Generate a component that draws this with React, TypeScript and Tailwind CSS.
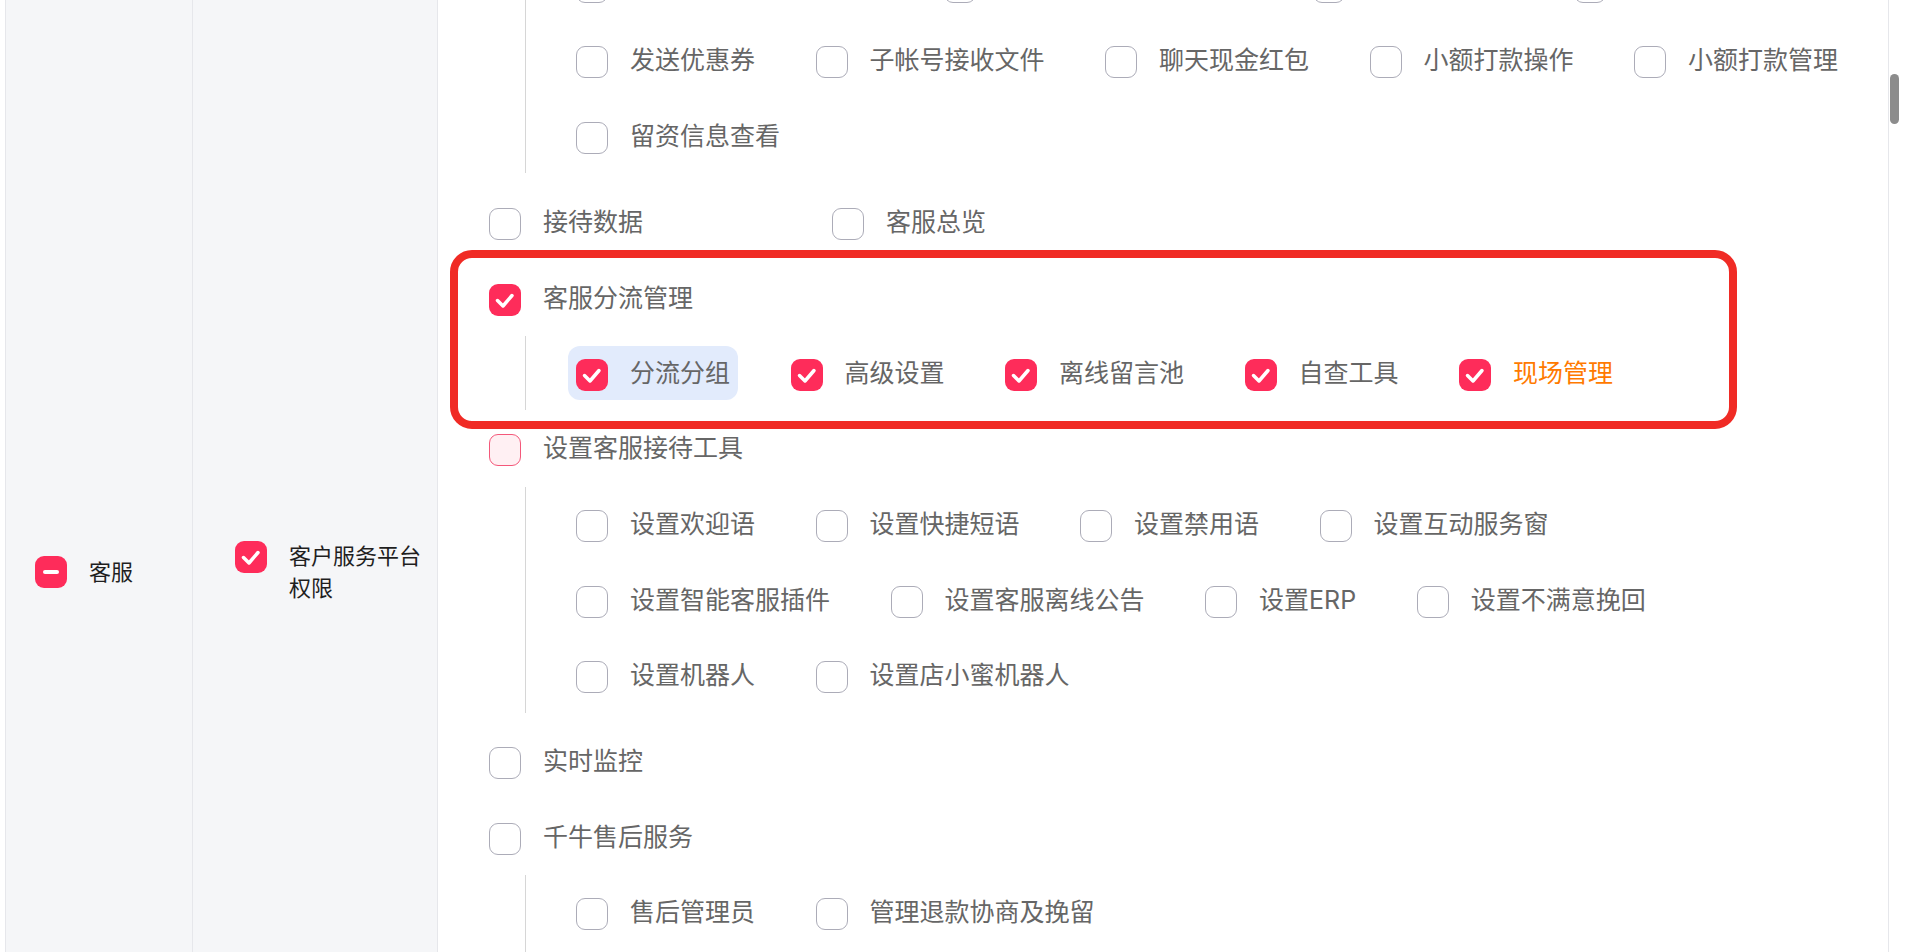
import React from "react";

type BoxState = "off" | "on" | "partial" | "hover";

type Item = {
  label: string;
  state?: BoxState;
  active?: boolean;
  accent?: boolean;
  width?: string;
};

function Box({ state = "off" }: { state?: BoxState }) {
  if (state === "on") {
    return (
      <span className="mt-[4px] flex h-[32px] w-[32px] shrink-0 items-center justify-center rounded-[9px] bg-[#fe2c5a]">
        <svg width="32" height="32" viewBox="0 0 32 32" fill="none">
          <path d="M8.5 16.5l5.5 5.5 9-10.5" stroke="white" strokeWidth="3.5" strokeLinecap="round" strokeLinejoin="round" />
        </svg>
      </span>
    );
  }
  if (state === "partial") {
    return (
      <span className="flex h-[32px] w-[32px] shrink-0 items-center justify-center rounded-[9px] bg-[#fe2c5a]">
        <span className="h-[4px] w-[16px] rounded-full bg-white" />
      </span>
    );
  }
  if (state === "hover") {
    return <span className="mt-[4px] h-[32px] w-[32px] shrink-0 rounded-[9px] border-[1.5px] border-[#f4587a] bg-[#fff0f3]" />;
  }
  return <span className="mt-[4px] h-[32px] w-[32px] shrink-0 rounded-[9px] border-[1.5px] border-[#acacb8] bg-white" />;
}

function Option({ item }: { item: Item }) {
  return (
    <div
      className={`flex h-[54px] shrink-0 items-center gap-[22px] rounded-[12px] px-[8px] ${item.active ? "bg-[#e2ebfc]" : ""} ${item.width ?? ""}`}
    >
      <Box state={item.state} />
      {item.label && (
        <span className={`whitespace-nowrap text-[25px] leading-[34px] ${item.accent ? "text-[#ff7a00]" : "text-[#666666]"}`}>
          {item.label}
        </span>
      )}
    </div>
  );
}

function Row({ items }: { items: Item[] }) {
  return (
    <div className="flex h-[54px] items-center gap-[44.5px]">
      {items.map((it, i) => (
        <Option key={i} item={it} />
      ))}
    </div>
  );
}

function Children({ rows, className = "" }: { rows: Item[][]; className?: string }) {
  return (
    <div className={`ml-[87px] flex flex-col gap-[21.5px] border-l border-[#d6d6d6] pl-[42px] ${className}`}>
      {rows.map((r, i) => (
        <Row key={i} items={r} />
      ))}
    </div>
  );
}

function Header({ items, className = "" }: { items: Item[]; className?: string }) {
  return (
    <div className={`flex h-[54px] items-center pl-[43px] ${className}`}>
      {items.map((it, i) => (
        <Option key={i} item={it} />
      ))}
    </div>
  );
}

export default function App() {
  // first row sits above the visible area; only the bottom edge of its boxes shows
  const topGroup: Item[][] = [
    [
      { label: "", width: "w-[323px]" },
      { label: "", width: "w-[325px]" },
      { label: "", width: "w-[216px]" },
      { label: "" },
    ],
    [
      { label: "发送优惠券" },
      { label: "子帐号接收文件" },
      { label: "聊天现金红包" },
      { label: "小额打款操作" },
      { label: "小额打款管理" },
    ],
    [{ label: "留资信息查看" }],
  ];

  const splitGroup: Item[][] = [
    [
      { label: "分流分组", state: "on", active: true },
      { label: "高级设置", state: "on" },
      { label: "离线留言池", state: "on" },
      { label: "自查工具", state: "on" },
      { label: "现场管理", state: "on", accent: true },
    ],
  ];

  const toolGroup: Item[][] = [
    [
      { label: "设置欢迎语" },
      { label: "设置快捷短语" },
      { label: "设置禁用语" },
      { label: "设置互动服务窗" },
    ],
    [
      { label: "设置智能客服插件" },
      { label: "设置客服离线公告" },
      { label: "设置ERP" },
      { label: "设置不满意挽回" },
    ],
    [{ label: "设置机器人" }, { label: "设置店小蜜机器人" }],
  ];

  const afterSale: Item[][] = [[{ label: "售后管理员" }, { label: "管理退款协商及挽留" }]];

  return (
    <div className="flex h-[952px] w-full overflow-hidden bg-white font-['Inter','Noto_Sans_CJK_SC',sans-serif]">
      <div className="w-[5px] shrink-0" />

      <div className="flex w-[188px] shrink-0 items-center border-x border-[#e6e7eb] bg-[#f5f6f8] pl-[29px] pt-[192px]">
        <div className="flex items-center gap-[22px]">
          <Box state="partial" />
          <span className="text-[22px] leading-[32px] text-[#1f1f1f]">客服</span>
        </div>
      </div>

      <div className="flex w-[245px] shrink-0 items-center border-r border-[#e6e7eb] bg-[#f5f6f8] pl-[42px] pr-[10px] pt-[192px]">
        <div className="flex items-start gap-[22px]">
          <span className="-mt-[3px]">
            <Box state="on" />
          </span>
          <span className="text-[22px] leading-[32px] text-[#1f1f1f]">客户服务平台权限</span>
        </div>
      </div>

      <div className="relative flex-1 border-r border-[#e6e7eb]">
        <div className="-mt-[42.5px] flex flex-col">
          <Children rows={topGroup} className="pb-[10.5px]" />
          <Header
            className="mt-[22px]"
            items={[{ label: "接待数据", width: "w-[343px]" }, { label: "客服总览" }]}
          />
          <Header className="mt-[21.5px]" items={[{ label: "客服分流管理", state: "on" }]} />
          <Children rows={splitGroup} className="mt-[11.5px] py-[10px]" />
          <Header className="mt-[11px]" items={[{ label: "设置客服接待工具", state: "hover" }]} />
          <Children rows={toolGroup} className="mt-[12px] pb-[11px] pt-[10px]" />
          <Header className="mt-[21px]" items={[{ label: "实时监控" }]} />
          <Header className="mt-[21.5px]" items={[{ label: "千牛售后服务" }]} />
          <Children rows={afterSale} className="mt-[11.5px] pb-[40px] pt-[10px]" />
        </div>

        <div className="pointer-events-none absolute left-[12px] top-[250px] h-[179px] w-[1287px] rounded-[22px] border-[8px] border-[#f02b25]" />
      </div>

      <div className="w-[29px] shrink-0 bg-white">
        <div className="ml-[1px] mt-[74px] h-[50px] w-[9px] rounded-full bg-[#8c8c8c]" />
      </div>
    </div>
  );
}
